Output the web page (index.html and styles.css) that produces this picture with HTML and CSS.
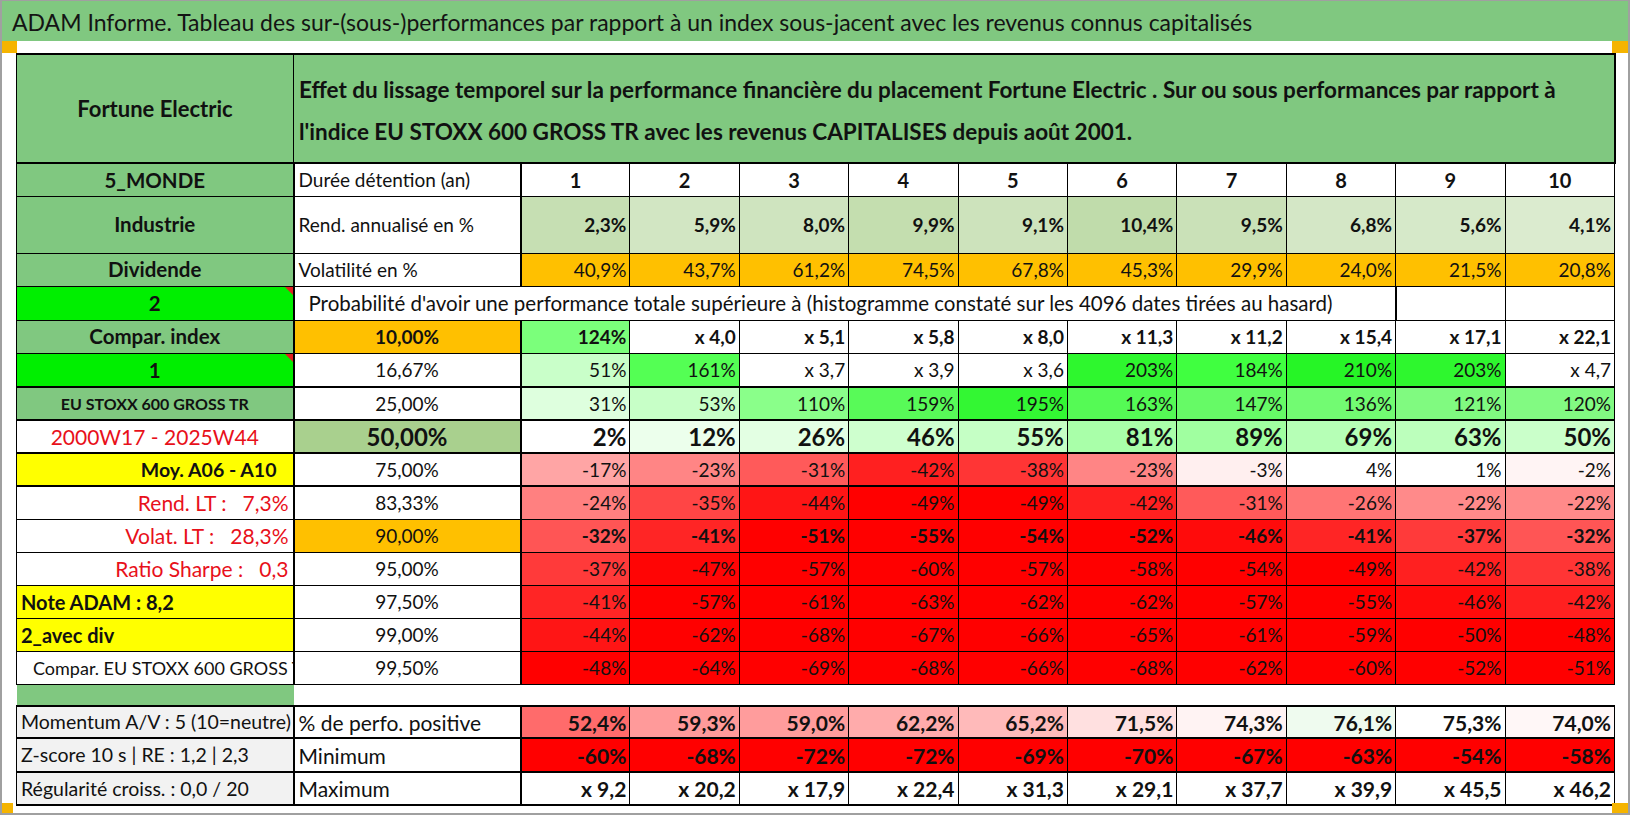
FILE: index.html
```html
<!DOCTYPE html>
<html lang="fr">
<head>
<meta charset="utf-8">
<title>ADAM Informe</title>
<link rel="stylesheet" href="styles.css">
</head>
<body>
<div class="sheet">
  <div class="title">ADAM Informe. Tableau des sur-(sous-)performances par rapport à un index sous-jacent avec les revenus connus capitalisés</div>
  <div class="area">
    <table class="perf">
      <colgroup>
        <col class="c-label"><col class="c-metric">
        <col class="c-year"><col class="c-year"><col class="c-year"><col class="c-year"><col class="c-year">
        <col class="c-year"><col class="c-year"><col class="c-year"><col class="c-year"><col class="c-year">
      </colgroup>
      <tbody>
        <tr class="r-head">
          <td class="lbl green head-name">Fortune Electric</td>
          <td class="desc green" colspan="11">Effet du lissage temporel sur la performance financière du placement Fortune Electric . Sur ou sous performances par rapport à<br>l'indice EU STOXX 600 GROSS TR avec les revenus CAPITALISES depuis août 2001.</td>
        </tr>
        <tr class="r33">
          <td class="lbl green key">5_MONDE</td>
          <td class="txt">Durée détention (an)</td>
          <td class="yr">1</td><td class="yr">2</td><td class="yr">3</td><td class="yr">4</td><td class="yr">5</td>
          <td class="yr">6</td><td class="yr">7</td><td class="yr">8</td><td class="yr">9</td><td class="yr">10</td>
        </tr>
        <tr class="r57">
          <td class="lbl green key">Industrie</td>
          <td class="txt">Rend. annualisé en %</td>
          <td class="num b" style="background:#c6dfb3">2,3%</td>
          <td class="num b" style="background:#d2e6c3">5,9%</td>
          <td class="num b" style="background:#cfe4bf">8,0%</td>
          <td class="num b" style="background:#c4deaf">9,9%</td>
          <td class="num b" style="background:#cde3bc">9,1%</td>
          <td class="num b" style="background:#c0dcab">10,4%</td>
          <td class="num b" style="background:#cae1b8">9,5%</td>
          <td class="num b" style="background:#d4e7c6">6,8%</td>
          <td class="num b" style="background:#d6e9c9">5,6%</td>
          <td class="num b" style="background:#dbebcf">4,1%</td>
        </tr>
        <tr class="r33">
          <td class="lbl green key">Dividende</td>
          <td class="txt">Volatilité en %</td>
          <td class="num orange">40,9%</td><td class="num orange">43,7%</td><td class="num orange">61,2%</td>
          <td class="num orange">74,5%</td><td class="num orange">67,8%</td><td class="num orange">45,3%</td>
          <td class="num orange">29,9%</td><td class="num orange">24,0%</td><td class="num orange">21,5%</td>
          <td class="num orange">20,8%</td>
        </tr>
        <tr class="r34">
          <td class="lbl lime key note">2<span class="flag"></span></td>
          <td class="prob" colspan="9">Probabilité d'avoir une performance totale supérieure à (histogramme constaté sur les 4096 dates tirées au hasard)</td>
          <td></td><td></td>
        </tr>
        <tr class="r33">
          <td class="lbl green key">Compar. index</td>
          <td class="pct orange b">10,00%</td>
          <td class="num b" style="background:#7bff7b">124%</td>
          <td class="num b">x 4,0</td><td class="num b">x 5,1</td><td class="num b">x 5,8</td><td class="num b">x 8,0</td>
          <td class="num b">x 11,3</td><td class="num b">x 11,2</td><td class="num b">x 15,4</td><td class="num b">x 17,1</td>
          <td class="num b">x 22,1</td>
        </tr>
        <tr class="r34">
          <td class="lbl lime key note">1<span class="flag"></span></td>
          <td class="pct">16,67%</td>
          <td class="num" style="background:#c9ffc9">51%</td>
          <td class="num" style="background:#54ff54">161%</td>
          <td class="num">x 3,7</td><td class="num">x 3,9</td><td class="num">x 3,6</td>
          <td class="num" style="background:#2ef72e">203%</td>
          <td class="num" style="background:#40ff40">184%</td>
          <td class="num" style="background:#26f526">210%</td>
          <td class="num" style="background:#2ef72e">203%</td>
          <td class="num">x 4,7</td>
        </tr>
        <tr class="r33 thick-top">
          <td class="lbl green small">EU STOXX 600 GROSS TR</td>
          <td class="pct">25,00%</td>
          <td class="num" style="background:#deffde">31%</td>
          <td class="num" style="background:#c7ffc7">53%</td>
          <td class="num" style="background:#8aff8a">110%</td>
          <td class="num" style="background:#58fa58">159%</td>
          <td class="num" style="background:#33f733">195%</td>
          <td class="num" style="background:#55fa55">163%</td>
          <td class="num" style="background:#66fa66">147%</td>
          <td class="num" style="background:#72fb72">136%</td>
          <td class="num" style="background:#80fa80">121%</td>
          <td class="num" style="background:#82fa82">120%</td>
        </tr>
        <tr class="r33 thick-top">
          <td class="lbl red-text">2000W17 - 2025W44</td>
          <td class="pct sage b large">50,00%</td>
          <td class="num b large" style="background:#ffffff">2%</td>
          <td class="num b large" style="background:#ecffec">12%</td>
          <td class="num b large" style="background:#e3ffe3">26%</td>
          <td class="num b large" style="background:#ceffce">46%</td>
          <td class="num b large" style="background:#c5ffc5">55%</td>
          <td class="num b large" style="background:#a9ffa9">81%</td>
          <td class="num b large" style="background:#a0ffa0">89%</td>
          <td class="num b large" style="background:#b6ffb6">69%</td>
          <td class="num b large" style="background:#bcffbc">63%</td>
          <td class="num b large" style="background:#caffca">50%</td>
        </tr>
        <tr class="r33 thick-top">
          <td class="lbl yellow right pr16 mid">Moy. A06 - A10</td>
          <td class="pct">75,00%</td>
          <td class="num" style="background:#ffa5a5">-17%</td>
          <td class="num" style="background:#ff8585">-23%</td>
          <td class="num" style="background:#ff5a5a">-31%</td>
          <td class="num" style="background:#ff2020">-42%</td>
          <td class="num" style="background:#ff3535">-38%</td>
          <td class="num" style="background:#ff8585">-23%</td>
          <td class="num" style="background:#ffefef">-3%</td>
          <td class="num">4%</td>
          <td class="num">1%</td>
          <td class="num" style="background:#fff4f4">-2%</td>
        </tr>
        <tr class="r33 thick-top">
          <td class="lbl red-text right pre">Rend. LT :   7,3%</td>
          <td class="pct">83,33%</td>
          <td class="num" style="background:#ff8080">-24%</td>
          <td class="num" style="background:#ff4545">-35%</td>
          <td class="num" style="background:#ff1515">-44%</td>
          <td class="num" style="background:#ff0000">-49%</td>
          <td class="num" style="background:#ff0000">-49%</td>
          <td class="num" style="background:#ff2020">-42%</td>
          <td class="num" style="background:#ff5a5a">-31%</td>
          <td class="num" style="background:#ff7575">-26%</td>
          <td class="num" style="background:#ff8a8a">-22%</td>
          <td class="num" style="background:#ff8a8a">-22%</td>
        </tr>
        <tr class="r33">
          <td class="lbl red-text right pre">Volat. LT :   28,3%</td>
          <td class="pct orange">90,00%</td>
          <td class="num b" style="background:#ff5555">-32%</td>
          <td class="num b" style="background:#ff2525">-41%</td>
          <td class="num b" style="background:#ff0000">-51%</td>
          <td class="num b" style="background:#ff0000">-55%</td>
          <td class="num b" style="background:#ff0000">-54%</td>
          <td class="num b" style="background:#ff0000">-52%</td>
          <td class="num b" style="background:#ff0b0b">-46%</td>
          <td class="num b" style="background:#ff2525">-41%</td>
          <td class="num b" style="background:#ff3a3a">-37%</td>
          <td class="num b" style="background:#ff5555">-32%</td>
        </tr>
        <tr class="r33">
          <td class="lbl red-text right pre">Ratio Sharpe :   0,3</td>
          <td class="pct">95,00%</td>
          <td class="num" style="background:#ff3a3a">-37%</td>
          <td class="num" style="background:#ff0505">-47%</td>
          <td class="num" style="background:#ff0000">-57%</td>
          <td class="num" style="background:#ff0000">-60%</td>
          <td class="num" style="background:#ff0000">-57%</td>
          <td class="num" style="background:#ff0000">-58%</td>
          <td class="num" style="background:#ff0000">-54%</td>
          <td class="num" style="background:#ff0000">-49%</td>
          <td class="num" style="background:#ff2020">-42%</td>
          <td class="num" style="background:#ff3535">-38%</td>
        </tr>
        <tr class="r33">
          <td class="lbl yellow left note-lbl">Note ADAM : 8,2</td>
          <td class="pct">97,50%</td>
          <td class="num" style="background:#ff2525">-41%</td>
          <td class="num" style="background:#ff0000">-57%</td>
          <td class="num" style="background:#ff0000">-61%</td>
          <td class="num" style="background:#ff0000">-63%</td>
          <td class="num" style="background:#ff0000">-62%</td>
          <td class="num" style="background:#ff0000">-62%</td>
          <td class="num" style="background:#ff0000">-57%</td>
          <td class="num" style="background:#ff0000">-55%</td>
          <td class="num" style="background:#ff0b0b">-46%</td>
          <td class="num" style="background:#ff2020">-42%</td>
        </tr>
        <tr class="r33">
          <td class="lbl yellow left note-lbl">2_avec div</td>
          <td class="pct">99,00%</td>
          <td class="num" style="background:#ff1515">-44%</td>
          <td class="num" style="background:#ff0000">-62%</td>
          <td class="num" style="background:#ff0000">-68%</td>
          <td class="num" style="background:#ff0000">-67%</td>
          <td class="num" style="background:#ff0000">-66%</td>
          <td class="num" style="background:#ff0000">-65%</td>
          <td class="num" style="background:#ff0000">-61%</td>
          <td class="num" style="background:#ff0000">-59%</td>
          <td class="num" style="background:#ff0000">-50%</td>
          <td class="num" style="background:#ff0000">-48%</td>
        </tr>
        <tr class="r33">
          <td class="lbl left clip">Compar. EU STOXX 600 GROSS TR</td>
          <td class="pct">99,50%</td>
          <td class="num" style="background:#ff0000">-48%</td>
          <td class="num" style="background:#ff0000">-64%</td>
          <td class="num" style="background:#ff0000">-69%</td>
          <td class="num" style="background:#ff0000">-68%</td>
          <td class="num" style="background:#ff0000">-66%</td>
          <td class="num" style="background:#ff0000">-68%</td>
          <td class="num" style="background:#ff0000">-62%</td>
          <td class="num" style="background:#ff0000">-60%</td>
          <td class="num" style="background:#ff0000">-52%</td>
          <td class="num" style="background:#ff0000">-51%</td>
        </tr>
        <tr class="r-gap">
          <td class="green"></td>
          <td></td><td></td><td></td><td></td><td></td><td></td><td></td><td></td><td></td><td></td><td></td>
        </tr>
        <tr class="r32 thick-top thick-bottom">
          <td class="lbl grey left stat">Momentum A/V : 5 (10=neutre)</td>
          <td class="txt big">% de perfo. positive</td>
          <td class="num b big" style="background:#ff6b6b">52,4%</td>
          <td class="num b big" style="background:#ff9a9a">59,3%</td>
          <td class="num b big" style="background:#ff9c9c">59,0%</td>
          <td class="num b big" style="background:#ffabab">62,2%</td>
          <td class="num b big" style="background:#ffbaba">65,2%</td>
          <td class="num b big" style="background:#ffe0e0">71,5%</td>
          <td class="num b big" style="background:#fff3f3">74,3%</td>
          <td class="num b big" style="background:#effbef">76,1%</td>
          <td class="num b big" style="background:#ffffff">75,3%</td>
          <td class="num b big" style="background:#fff7f7">74,0%</td>
        </tr>
        <tr class="r34 thick-bottom">
          <td class="lbl grey left stat">Z-score 10 s | RE : 1,2 | 2,3</td>
          <td class="txt big">Minimum</td>
          <td class="num b big" style="background:#ff0000">-60%</td>
          <td class="num b big" style="background:#ff0000">-68%</td>
          <td class="num b big" style="background:#ff0000">-72%</td>
          <td class="num b big" style="background:#ff0000">-72%</td>
          <td class="num b big" style="background:#ff0000">-69%</td>
          <td class="num b big" style="background:#ff0000">-70%</td>
          <td class="num b big" style="background:#ff0000">-67%</td>
          <td class="num b big" style="background:#ff0000">-63%</td>
          <td class="num b big" style="background:#ff0000">-54%</td>
          <td class="num b big" style="background:#ff0000">-58%</td>
        </tr>
        <tr class="r33 thick-bottom">
          <td class="lbl grey left stat">Régularité croiss. : 0,0 / 20</td>
          <td class="txt big">Maximum</td>
          <td class="num b big">x 9,2</td><td class="num b big">x 20,2</td><td class="num b big">x 17,9</td>
          <td class="num b big">x 22,4</td><td class="num b big">x 31,3</td><td class="num b big">x 29,1</td>
          <td class="num b big">x 37,7</td><td class="num b big">x 39,9</td><td class="num b big">x 45,5</td>
          <td class="num b big">x 46,2</td>
        </tr>
      </tbody>
    </table>
  </div>
  <span class="handle h-tl"></span>
  <span class="handle h-tr"></span>
  <span class="handle h-bl"></span>
  <span class="handle h-br"></span>
</div>
</body>
</html>
```

FILE: styles.css
```css
* { box-sizing: border-box; }
html, body { margin: 0; padding: 0; background: #ffffff; }
body { font-family: "Lato", "Liberation Sans", sans-serif; color: #111; }

.sheet {
  position: relative;
  width: 1630px;
  height: 815px;
  border-left: 2px solid #a0a0a0;
  border-right: 2px solid #a0a0a0;
  border-bottom: 2px solid #a0a0a0;
  border-top: 1px solid #a0a0a0;
  background: #fff;
  overflow: hidden;
}

.title {
  height: 40px;
  margin: 0 -2px;
  background: #80c880;
  font-size: 23px;
  line-height: 38px;
  padding: 2px 0 0 12px;
  white-space: nowrap;
  color: #141414;
}

.area {
  padding: 12px 0 0 14px;
}

.perf {
  border-collapse: collapse;
  table-layout: fixed;
  width: 1598px;
  font-size: 19px;
}
.c-label { width: 277px; }
.c-metric { width: 227px; }
.c-year { width: 109.4px; }

.perf td {
  border: 1px solid #000;
  padding: 0 4px;
  white-space: nowrap;
  overflow: hidden;
  vertical-align: middle;
  line-height: 1;
}

.r-head td { height: 109px; border-top: 2px solid #000; border-bottom: 2px solid #000; }
.r33 td { height: 33px; }
.r34 td { height: 34px; }
.r32 td { height: 32px; }
.r57 td { height: 57px; }
.r-gap td { height: 22px; border: none; }
.thick-top td { border-top: 2px solid #000; }
.thick-bottom td { border-bottom: 2px solid #000; }

.perf td:first-child { border-right: 2px solid #000; }
.perf td:nth-child(2) { border-right: 2px solid #000; }
.perf .r-head td:first-child { border-right: 1px solid #000; }
.perf .r-gap td { border: none; }

.green { background: #80c880; }
.lime { background: #00ef00; }
.orange { background: #ffc000; }
.yellow { background: #ffff00; }
.grey { background: #f2f2f2; }
.sage { background: #a9d08e; }

.lbl { text-align: center; }
.lbl.left { text-align: left; }
.lbl.right { text-align: right; }
.pr16 { padding-right: 16px !important; }
.pre { white-space: pre !important; }
.key { font-size: 20.5px; font-weight: 700; }
.mid { font-size: 19.5px; font-weight: 700; }
.note-lbl { font-size: 20px; font-weight: 700; }
.stat { font-size: 19.5px; }
.big { font-size: 21px; }
.small { font-size: 16px; font-weight: 700; }
.large { font-size: 24px; }
.b { font-weight: 700; }
.red-text { color: #e8101a; font-size: 21px; }

.head-name { font-size: 22px; font-weight: 700; }
.desc {
  font-size: 22.5px;
  font-weight: 700;
  line-height: 42px !important;
  padding: 4px 0 0 5px !important;
  text-align: left;
}

.txt { text-align: left; }
.yr { text-align: center; font-weight: 700; font-size: 20px; }
.num { text-align: right; padding-right: 3px !important; }
.pct { text-align: center; }

.prob {
  text-align: left;
  padding-left: 14px !important;
  font-size: 20.5px;
}

.note { position: relative; }
.flag {
  position: absolute;
  top: 0;
  right: 0;
  width: 0;
  height: 0;
  border-top: 8px solid #e02020;
  border-left: 8px solid transparent;
}

.clip { padding-left: 16px !important; font-size: 18px; text-overflow: clip; }

.handle {
  position: absolute;
  background: #f5b400;
}
.h-tl { left: -2px; top: 40px; width: 17px; height: 12px; }
.h-tr { right: -2px; top: 40px; width: 18px; height: 12px; }
.h-bl { left: -2px; bottom: 0; width: 13px; height: 10px; }
.h-br { right: -2px; bottom: 0; width: 18px; height: 10px; }
```
